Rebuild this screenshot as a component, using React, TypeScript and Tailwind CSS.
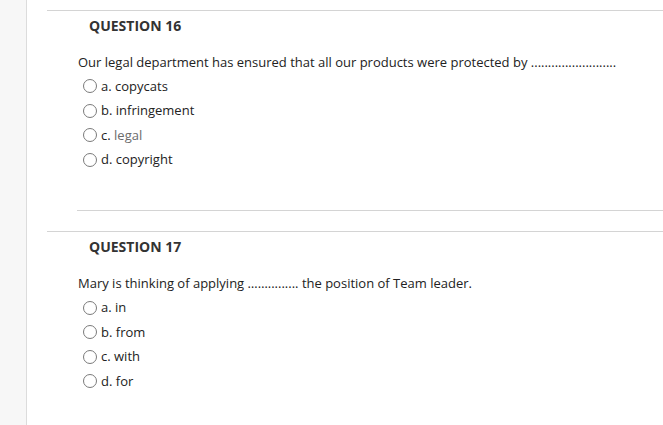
const questions = [
  {
    number: 16,
    text: 'Our legal department has ensured that all our products were protected by .........................',
    options: [
      { key: 'a.', label: 'copycats' },
      { key: 'b.', label: 'infringement' },
      { key: 'c.', label: 'legal', muted: true },
      { key: 'd.', label: 'copyright' },
    ],
  },
  {
    number: 17,
    text: 'Mary is thinking of applying ……......... the position of Team leader.',
    options: [
      { key: 'a.', label: 'in' },
      { key: 'b.', label: 'from' },
      { key: 'c.', label: 'with' },
      { key: 'd.', label: 'for' },
    ],
  },
];

type Option = { key: string; label: string; muted?: boolean };

const Radio = () => (
  <span className="w-[14px] h-[14px] rounded-full border border-[#7a7a7a] bg-white shrink-0" />
);

const Question = ({ number, text, options, last }: { number: number; text: string; options: Option[]; last?: boolean }) => (
  <div className="border-t border-[#d4d4d4]">
    <h3 className="pl-[42px] pt-[5px] text-[14px] leading-[20px] font-bold text-[#333]">
      QUESTION {number}
    </h3>
    <div className="pl-[31px] mt-[17px]">
      <p className="text-[13px] leading-[18px] text-[#222]">{text}</p>
      <ul className="mt-[3px] pl-[5px]">
        {options.map(opt => (
          <li key={opt.key} className="h-[24.6px] flex items-center gap-[4px] text-[13px] text-[#222]">
            <Radio />
            <span>
              {opt.key}{' '}
              <span className={opt.muted ? 'text-[#6b6b6b]' : ''}>{opt.label}</span>
            </span>
          </li>
        ))}
      </ul>
    </div>
    {!last && <div className="ml-[30px] mt-[38px] mb-[20px] border-t border-[#d4d4d4]" />}
  </div>
);

export default function App() {
  return (
    <div
      className="w-[663px] h-[425px] flex bg-white overflow-hidden"
      style={{ fontFamily: '"Open Sans", "Noto Sans", Arial, sans-serif' }}
    >
      <div className="w-[27px] h-full bg-[#f7f7f7] border-r border-[#dcdcdc] shrink-0" />
      <div className="flex-1 pl-[20px] pt-[10px]">
        {questions.map((q, i) => (
          <Question key={q.number} {...q} last={i === questions.length - 1} />
        ))}
      </div>
    </div>
  );
}
